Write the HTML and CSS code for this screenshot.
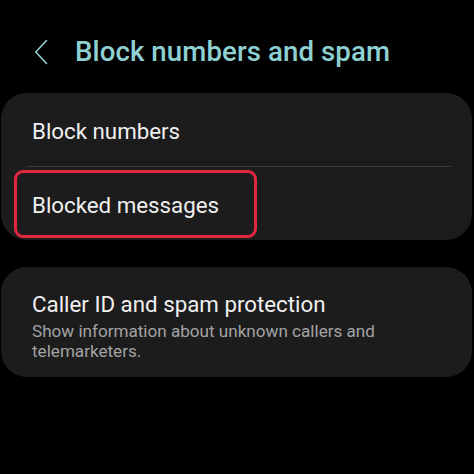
FILE: index.html
```html
<!DOCTYPE html>
<html lang="en">
<head>
    <meta charset="UTF-8">
    <meta name="viewport" content="width=device-width, initial-scale=1.0">
    <title>Block numbers and spam</title>
    <link rel="stylesheet" href="styles.css">
</head>
<body>
    <div class="screen">
        <header class="app-bar">
            <button type="button" class="back-btn" aria-label="Back">
                <svg width="14" height="26" viewBox="0 0 14 26">
                    <path d="M12.5 1.5 L1.8 13 L12.5 24.5" fill="none" stroke="#8fd0d2" stroke-width="1.6" stroke-linecap="round" stroke-linejoin="round"/>
                </svg>
            </button>
            <h1 class="title">Block numbers and spam</h1>
        </header>

        <section class="card">
            <div class="row">
                <span class="row-label">Block numbers</span>
            </div>
            <div class="divider"></div>
            <div class="row highlighted">
                <span class="row-label">Blocked messages</span>
            </div>
        </section>

        <section class="card">
            <div class="row tall">
                <span class="row-label">Caller ID and spam protection</span>
                <span class="row-sub">Show information about unknown callers and telemarketers.</span>
            </div>
        </section>
    </div>
</body>
</html>
```

FILE: styles.css
```css
*, *::before, *::after { box-sizing: border-box; }
html, body { margin: 0; padding: 0; background: #000; }
body { font-family: Roboto, "Noto Sans", sans-serif; color: #f2f2f2; }

.screen { width: 474px; height: 474px; overflow: hidden; padding: 0 2px 0 1px; }

.app-bar {
    display: flex;
    align-items: center;
    height: 93px;
    padding: 10px 0 0 33px;
    gap: 27px;
}

.back-btn {
    background: none;
    border: 0;
    padding: 0;
    display: flex;
    cursor: pointer;
}

.title {
    margin: 0;
    font-size: 27.6px;
    font-weight: 500;
    color: #8fd0d2;
    letter-spacing: 0.1px;
}

.card {
    background: #1c1c1c;
    border-radius: 26px;
    margin-bottom: 27px;
}

.row {
    position: relative;
    display: flex;
    flex-direction: column;
    justify-content: center;
    height: 73px;
    padding: 2px 31px 0;
}

.row.tall { height: 110px; padding-top: 6px; }

.row-label { font-size: 22.3px; line-height: 28px; color: #f0f0f0; }

.row-sub {
    font-size: 17.1px;
    line-height: 20px;
    margin-top: 3px;
    color: #a3a3a3;
    padding-right: 60px;
}

.divider { height: 1px; background: #3b3b3b; margin: 0 21px 0 26px; }

.highlighted::after {
    content: '';
    position: absolute;
    left: 13px;
    top: 3px;
    width: 243px;
    height: 68px;
    border: 3px solid #e0283c;
    border-radius: 9px;
}
```
